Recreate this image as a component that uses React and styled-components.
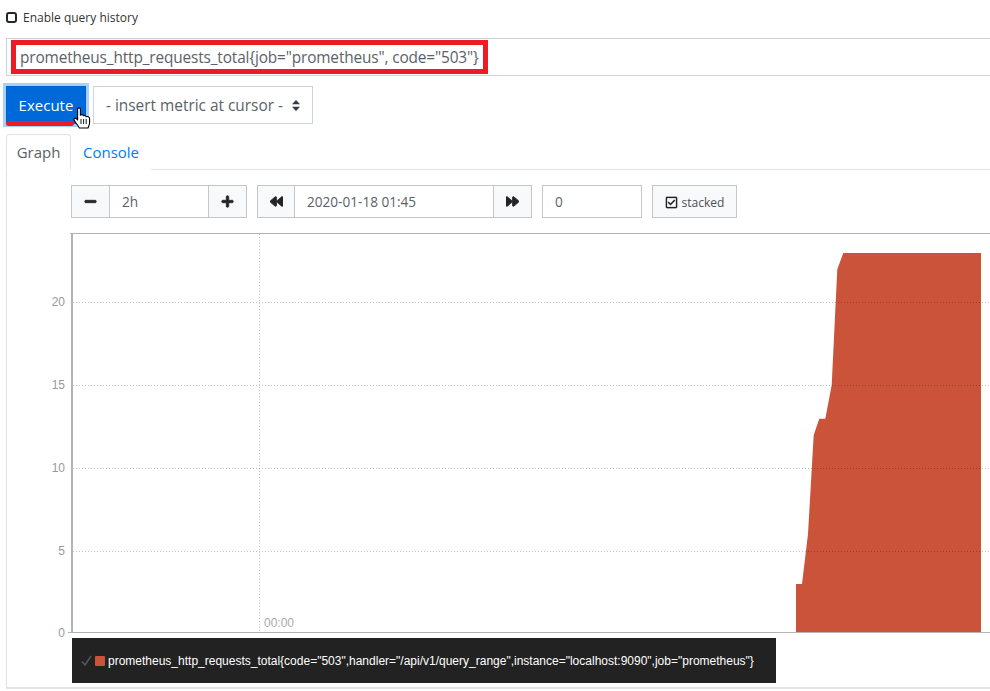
import React from "react";
import styled, { createGlobalStyle } from "styled-components";
import { FaMinus, FaPlus, FaBackward, FaForward, FaRegCheckSquare } from "react-icons/fa";

const GlobalStyle = createGlobalStyle`
  html, body {
    margin: 0;
    padding: 0;
    background: #fff;
    overflow: hidden;
  }
  * {
    box-sizing: border-box;
  }
`;

const Page = styled.div`
  position: relative;
  width: 990px;
  height: 691px;
  overflow: hidden;
  color: #495057;
  font-family: "Open Sans", "Noto Sans", sans-serif;
`;

const HistoryRow = styled.label`
  display: flex;
  align-items: center;
  gap: 6px;
  height: 38px;
  padding: 0 0 4px 6px;
  font-size: 12px;
  color: #333;
`;

const HistoryCheck = styled.input`
  appearance: none;
  width: 11px;
  height: 11px;
  margin: 0;
  border: 2px solid #23272b;
  border-radius: 3px;
  background: #fff;
`;

const ExpressionRow = styled.div`
  position: relative;
  margin-left: 6px;
  height: 38px;
`;

const ExpressionInput = styled.input`
  display: block;
  width: 100%;
  height: 100%;
  padding: 1px 0 0 13px;
  border: 1px solid #ced4da;
  border-right: none;
  outline: none;
  font-family: inherit;
  font-size: 15.4px;
  letter-spacing: -0.14px;
  color: #5a6268;
`;

const RedBox = styled.div`
  position: absolute;
  left: 5px;
  top: 2px;
  width: 477px;
  height: 34px;
  border: 5px solid #ed1c24;
  pointer-events: none;
`;

const ActionRow = styled.div`
  display: flex;
  gap: 7px;
  margin: 10px 0 0 6px;
  height: 38px;
`;

const ExecuteWrap = styled.div`
  position: relative;
`;

const ExecuteButton = styled.button`
  width: 80px;
  height: 38px;
  padding: 0;
  border: 1px solid #0062cc;
  background: #0069d9;
  box-shadow: 0 0 0 3px rgba(130, 190, 250, 0.7);
  color: #fff;
  font-family: inherit;
  font-size: 15px;
`;

const RedUnderline = styled.div`
  position: absolute;
  left: 0;
  top: 35px;
  width: 68px;
  height: 5px;
  border-radius: 3px;
  background: #ed1c24;
`;

const HandCursor = styled.svg`
  position: absolute;
  left: 67px;
  top: 21px;
  width: 18px;
  height: 22px;
`;

const MetricSelect = styled.div`
  display: flex;
  align-items: center;
  justify-content: space-between;
  width: 220px;
  padding: 0 12px 0 12px;
  border: 1px solid #ced4da;
  font-size: 15.4px;
  color: #5a6268;
`;

const Tabs = styled.div`
  display: flex;
  margin: 10px 0 0 6px;
  height: 36px;
  border-bottom: 1px solid #dee2e6;
`;

const Tab = styled.div`
  display: flex;
  align-items: center;
  justify-content: center;
  width: ${(p) => (p.$active ? "65px" : "80px")};
  height: 36px;
  font-size: 15px;
  color: ${(p) => (p.$active ? "#5a6268" : "#007bff")};
  background: #fff;
  border: 1px solid ${(p) => (p.$active ? "#dee2e6" : "transparent")};
  border-bottom: 1px solid ${(p) => (p.$active ? "#fff" : "transparent")};
  border-radius: 4px 4px 0 0;
`;

const Panel = styled.div`
  margin-left: 6px;
  height: 519px;
  padding-top: 15px;
  border-left: 1px solid #dee2e6;
  border-bottom: 2px solid #e3e3e3;
`;

const Controls = styled.div`
  display: flex;
  gap: 10px;
  height: 33px;
  margin-left: 64px;
`;

const ControlGroup = styled.div`
  display: flex;
`;

const AddonButton = styled.div`
  display: flex;
  align-items: center;
  justify-content: center;
  width: ${(p) => p.$width}px;
  background: #f8f9fa;
  border: 1px solid #c6c6c6;
  margin-left: ${(p) => (p.$joined ? "-1px" : "0")};
  color: #212529;
  font-size: 13px;
  svg {
    stroke: currentColor;
    stroke-width: 30px;
  }
`;

const ControlInput = styled.div`
  display: flex;
  align-items: center;
  width: ${(p) => p.$width}px;
  padding-left: 12px;
  background: #fff;
  border: 1px solid #c6c6c6;
  margin-left: ${(p) => (p.$joined ? "-1px" : "0")};
  font-size: 13.6px;
  color: #5a6268;
`;

const StackedButton = styled.div`
  display: flex;
  align-items: center;
  justify-content: center;
  gap: 4px;
  width: 85px;
  padding-top: 1px;
  background: #f8f9fa;
  border: 1px solid #c6c6c6;
  font-size: 12px;
  color: #495057;
  svg {
    color: #212529;
    font-size: 13px;
    stroke: currentColor;
    stroke-width: 8px;
  }
`;

const GraphSvg = styled.svg`
  display: block;
  margin-top: 15px;
  font-family: "Liberation Sans", Arial, sans-serif;
  font-size: 12px;
`;

const Legend = styled.div`
  display: flex;
  align-items: center;
  width: 704px;
  height: 45px;
  margin-left: 65px;
  padding-left: 9px;
  background: #222;
  color: #fff;
  font-family: "Liberation Sans", Arial, sans-serif;
  font-size: 12px;
  white-space: nowrap;
`;

const LegendCheck = styled.svg`
  width: 11px;
  height: 11px;
  margin-right: 3px;
`;

const LegendSwatch = styled.span`
  width: 10px;
  height: 10px;
  margin-right: 3px;
  border-radius: 1px;
  background: #cb5339;
`;

const yTicks = [
  { label: "0", y: 632.5 },
  { label: "5", y: 551 },
  { label: "10", y: 468 },
  { label: "15", y: 385 },
  { label: "20", y: 302 },
];

const areaPoints =
  "796,632 796,584 802,584 808,534 813.7,435 819.3,418.7 825.3,418.7 831.7,385 837.3,269.3 843.3,253 981,253 981,632";

const SortCaret = () => (
  <svg width="8" height="11" viewBox="0 0 8 11">
    <path d="M4 0 L8 4.2 H0 Z M4 11 L0 6.8 H8 Z" fill="#343a40" />
  </svg>
);

const Graph = () => (
  <GraphSvg width="983" height="405" viewBox="7 233 983 405">
    <polygon points={areaPoints} fill="#cb5339" />
    {yTicks.slice(1).map((t) => (
      <line key={t.label} x1="73" x2="990" y1={t.y + 0.5} y2={t.y + 0.5} stroke="rgba(0,0,0,0.24)" strokeDasharray="1 2" />
    ))}
    <line x1="259.5" x2="259.5" y1="234" y2="632" stroke="rgba(0,0,0,0.24)" strokeDasharray="1 2" />
    <line x1="70" x2="990" y1="233.5" y2="233.5" stroke="#b3b3b3" />
    <line x1="72" x2="72" y1="233" y2="633" stroke="#b3b3b3" strokeWidth="2" />
    <line x1="68" x2="990" y1="632.5" y2="632.5" stroke="#b3b3b3" />
    {yTicks.map((t) => (
      <text key={t.label} x="65" y={t.y + 4} textAnchor="end" fill="#999">
        {t.label}
      </text>
    ))}
    <text x="264" y="627" fill="#aaa">
      00:00
    </text>
  </GraphSvg>
);

const App = () => (
  <Page>
    <GlobalStyle />
    <HistoryRow>
      <HistoryCheck type="checkbox" readOnly />
      Enable query history
    </HistoryRow>
    <ExpressionRow>
      <ExpressionInput readOnly value={'prometheus_http_requests_total{job="prometheus", code="503"}'} />
      <RedBox />
    </ExpressionRow>
    <ActionRow>
      <ExecuteWrap>
        <ExecuteButton>Execute</ExecuteButton>
        <RedUnderline />
        <HandCursor viewBox="0 0 18 22">
          <path
            d="M4.6 2 C4.6 .5 7.4 .5 7.4 2 V8.2 C8.4 7.2 10.2 7.6 10.4 8.8 C11.4 8 12.9 8.6 13.1 9.8 C14.2 9.2 16.6 9.8 16.6 11.6 V15.5 C16.6 18 15.6 19 15 21 H6.4 C5 18.6 3.2 16.4 1.2 13.4 C.4 11.8 2.2 10.4 3.4 11.6 L4.6 13 Z"
            fill="#fff"
            stroke="#000"
            strokeWidth="1.1"
            strokeLinejoin="round"
          />
          <path d="M8 12 V17 M10.6 12 V17 M13.2 12 V17" stroke="#000" strokeWidth="0.9" />
        </HandCursor>
      </ExecuteWrap>
      <MetricSelect>
        - insert metric at cursor -
        <SortCaret />
      </MetricSelect>
    </ActionRow>
    <Tabs>
      <Tab $active>Graph</Tab>
      <Tab>Console</Tab>
    </Tabs>
    <Panel>
      <Controls>
        <ControlGroup>
          <AddonButton $width={39}>
            <FaMinus />
          </AddonButton>
          <ControlInput $width={100} $joined>
            2h
          </ControlInput>
          <AddonButton $width={39} $joined>
            <FaPlus />
          </AddonButton>
        </ControlGroup>
        <ControlGroup>
          <AddonButton $width={38}>
            <FaBackward />
          </AddonButton>
          <ControlInput $width={200} $joined>
            2020-01-18 01:45
          </ControlInput>
          <AddonButton $width={39} $joined>
            <FaForward />
          </AddonButton>
        </ControlGroup>
        <ControlInput $width={100}>0</ControlInput>
        <StackedButton>
          <FaRegCheckSquare />
          stacked
        </StackedButton>
      </Controls>
      <Graph />
      <Legend>
        <LegendCheck viewBox="0 0 11 11">
          <path d="M1 6.5 L4 10 L10 1" fill="none" stroke="#555" strokeWidth="1.6" />
        </LegendCheck>
        <LegendSwatch />
        {'prometheus_http_requests_total{code="503",handler="/api/v1/query_range",instance="localhost:9090",job="prometheus"}'}
      </Legend>
    </Panel>
  </Page>
);

export default App;
